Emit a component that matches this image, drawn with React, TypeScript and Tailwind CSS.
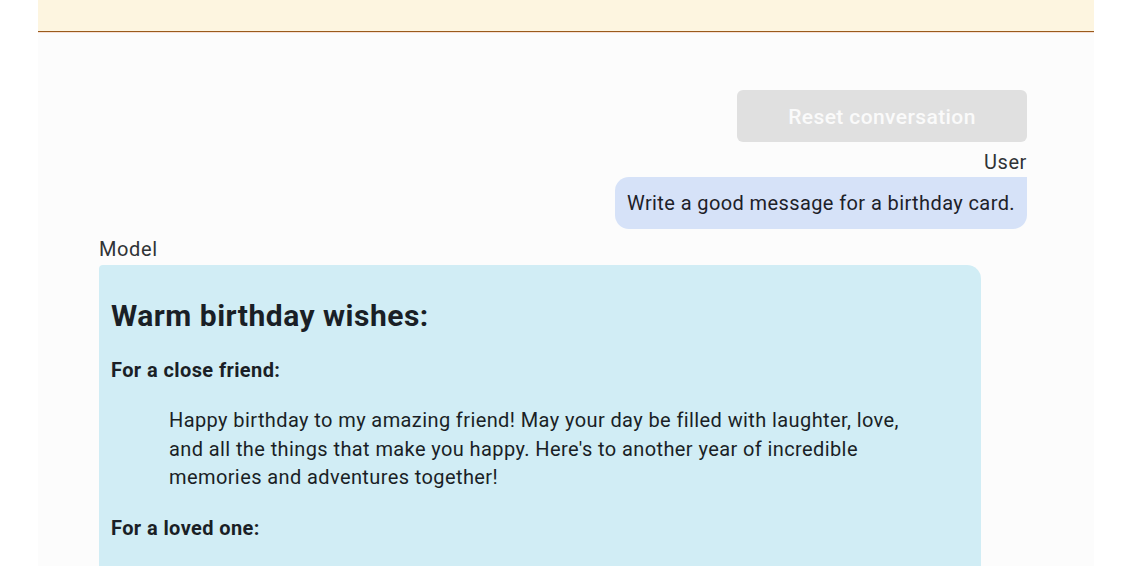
import React from "react";

export default function App() {
  return (
    <div className="w-full h-[566px] bg-white flex justify-center overflow-hidden font-[Roboto,'Liberation_Sans',sans-serif]">
      <div className="w-[1056px] h-full bg-[#fcfcfc] flex flex-col">
        <div className="h-[32px] shrink-0 bg-[#fdf5e0] border-b border-[#9a5a1c]" />
        <div className="h-[1px] shrink-0 bg-[#f6e0d6]" />
        <div className="flex flex-col pl-[61px] pr-[67px] pt-[57px]">
          <div className="flex justify-end">
            <button className="w-[290px] h-[52px] pt-[3px] rounded-[6px] bg-[#e0e0e0] text-[#fafafa] text-[21px] font-medium tracking-[0.4px]">
              Reset conversation
            </button>
          </div>
          <div className="flex flex-col items-end mt-[8px]">
            <div className="text-[20px] leading-[24px] tracking-[0.6px] text-[#303336]">User</div>
            <div className="mt-[3px] bg-[#d6e2f8] rounded-[14px] rounded-tr-none px-[12px] h-[52px] flex items-center text-[20px] tracking-[0.4px] text-[#1d2129]">
              Write a good message for a birthday card.
            </div>
          </div>
          <div className="flex flex-col items-start mt-[8px]">
            <div className="text-[20px] leading-[24px] tracking-[0.6px] text-[#303336]">Model</div>
            <div className="mt-[4px] w-[882px] bg-[#d1edf5] rounded-[14px] rounded-tl-[4px] px-[12px] pt-[33px] pb-[60px] text-[#1a1f26]">
              <h1 className="text-[30px] font-bold leading-[36px] tracking-[0.5px]">Warm birthday wishes:</h1>
              <p className="mt-[22px] text-[20px] font-bold leading-[28px] tracking-[0.4px]">For a close friend:</p>
              <blockquote className="mt-[22px] ml-[58px] mr-[40px] text-[20px] leading-[28.5px] tracking-[0.4px]">
                Happy birthday to my amazing friend! May your day be filled with laughter, love, and all the things that make you happy. Here's to another year of incredible memories and adventures together!
              </blockquote>
              <p className="mt-[22px] text-[20px] font-bold leading-[28px] tracking-[0.4px]">For a loved one:</p>
            </div>
          </div>
        </div>
      </div>
    </div>
  );
}
